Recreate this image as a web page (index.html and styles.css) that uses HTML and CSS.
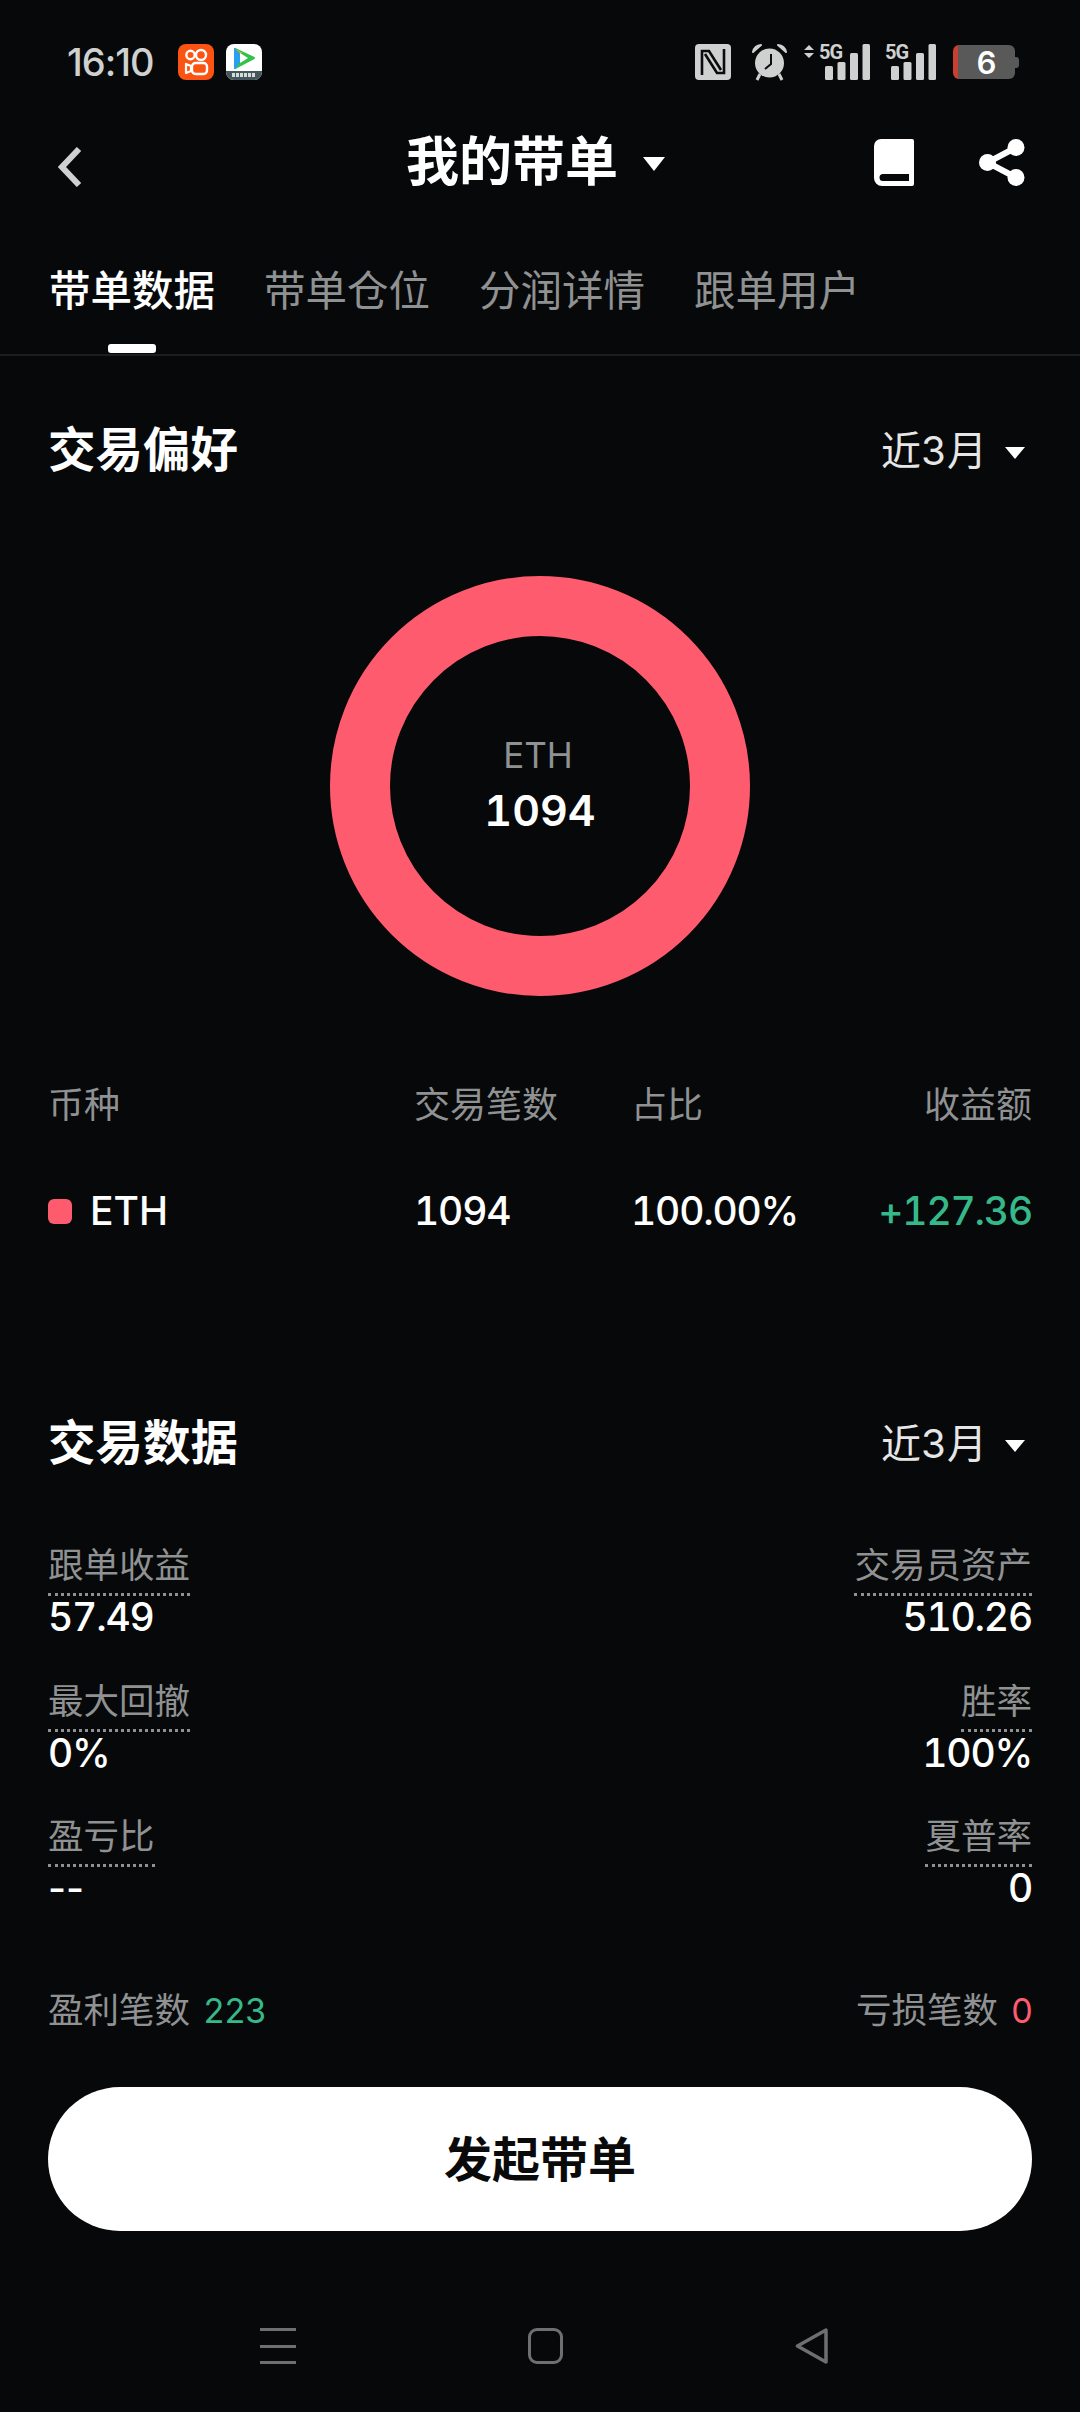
FILE: index.html
```html
<!DOCTYPE html>
<html lang="zh-CN">
<head>
    <meta charset="UTF-8">
    <meta name="viewport" content="width=device-width, initial-scale=1.0">
    <title>我的带单</title>
    <link rel="stylesheet" href="styles.css">
</head>
<body>

    <!-- Status bar -->
    <div class="status-bar">
        <div class="status-left">
            <span class="time">16:10</span>
            <svg class="app-icon" viewBox="0 0 36 36">
                <rect width="36" height="36" rx="8" fill="#fb5412"/>
                <circle cx="12.5" cy="11" r="4.2" fill="none" stroke="#fff" stroke-width="2.4"/>
                <circle cx="23" cy="11" r="5" fill="none" stroke="#fff" stroke-width="2.4"/>
                <rect x="14" y="19" width="15" height="11" rx="3.5" fill="none" stroke="#fff" stroke-width="2.4"/>
                <path d="M13 22 L8 20 V29 L13 27 Z" fill="none" stroke="#fff" stroke-width="2.2" stroke-linejoin="round"/>
            </svg>
            <svg class="app-icon" viewBox="0 0 36 36">
                <rect width="36" height="36" rx="8" fill="#fff"/>
                <path d="M0 27 H36 V28 A8 8 0 0 1 28 36 H8 A8 8 0 0 1 0 28 Z" fill="#45575c"/>
                <path d="M9 5 L28 14 L9 24 Z" fill="#35c24a" stroke="#35c24a" stroke-width="2" stroke-linejoin="round"/>
                <path d="M9 5 L15 14 L9 24 Z" fill="#2a9df4" stroke="#2a9df4" stroke-width="2" stroke-linejoin="round"/>
                <path d="M14 9 L22 14 L14 19 Z" fill="#fff"/>
                <path d="M9 5 L17 9 L14 9 Z" fill="#f6a623"/>
                <path d="M6 31 H30" stroke="#d5dadb" stroke-width="4" stroke-dasharray="3 1"/>
            </svg>
        </div>
        <div class="status-right">
            <svg class="nfc-icon" viewBox="0 0 36 36">
                <rect width="36" height="36" rx="4" fill="#cfd0d0"/>
                <path d="M7 31 V7 H14 L26 26" fill="none" stroke="#0a0c0d" stroke-width="2.6"/>
                <path d="M29 5 V29 H22 L10 10" fill="none" stroke="#0a0c0d" stroke-width="2.6"/>
            </svg>
            <svg class="alarm-icon" viewBox="0 0 37 38">
                <path d="M2 9 A9 9 0 0 1 10 2 Z M35 9 A9 9 0 0 0 27 2 Z" fill="#cfd0d0" stroke="#cfd0d0" stroke-width="2" stroke-linejoin="round"/>
                <circle cx="18.5" cy="20" r="14.5" fill="#cfd0d0"/>
                <path d="M6 37 L9 31 M31 37 L28 31" stroke="#cfd0d0" stroke-width="3"/>
                <path d="M20 11 V21 L14 26" fill="none" stroke="#0a0c0d" stroke-width="2"/>
            </svg>
            <svg class="signal-icon signal-wide" viewBox="0 0 66 36">
                <path d="M5 1 L10 6 H0 Z M0 9 H10 L5 14 Z" fill="#cfd0d0"/>
                <text x="15" y="15" class="signal-label">5G</text>
                <rect x="21" y="22" width="8" height="14" rx="1.5" fill="#cfd0d0"/>
                <rect x="33.500" y="18" width="8" height="18" rx="1.5" fill="#cfd0d0"/>
                <rect x="46" y="9" width="8" height="27" rx="1.5" fill="#cfd0d0"/>
                <rect x="58.500" y="0" width="7.500" height="36" rx="1.5" fill="#cfd0d0"/>
            </svg>
            <svg class="signal-icon signal-narrow" viewBox="0 0 51 36">
                <text x="0" y="15" class="signal-label">5G</text>
                <rect x="6" y="22" width="8" height="14" rx="1.5" fill="#cfd0d0"/>
                <rect x="18.500" y="18" width="8" height="18" rx="1.5" fill="#cfd0d0"/>
                <rect x="31" y="9" width="8" height="27" rx="1.5" fill="#cfd0d0"/>
                <rect x="43.500" y="0" width="7.500" height="36" rx="1.5" fill="#cfd0d0"/>
            </svg>
            <div class="battery">
                <div class="battery-body"><span>6</span></div>
                <div class="battery-tip"></div>
            </div>
        </div>
    </div>

    <!-- Nav bar -->
    <div class="nav-bar">
        <svg class="back-icon" viewBox="0 0 24 40">
            <path d="M21 2 L4 20 L21 38" fill="none" stroke="#d0d0d0" stroke-width="6"/>
        </svg>
        <div class="nav-title">
            <span>我的带单</span>
            <i class="caret caret-big"></i>
        </div>
        <div class="nav-actions">
            <svg class="book-icon" viewBox="0 0 40 47">
                <path d="M7 0 H38 A2 2 0 0 1 40 2 V45 A2 2 0 0 1 38 47 H8 A8 8 0 0 1 0 39 V7 A7 7 0 0 1 7 0 Z M9 35 A3.500 3.500 0 0 0 9 42 H35 V35 Z" fill="#fff" fill-rule="evenodd"/>
            </svg>
            <svg class="share-icon" viewBox="0 0 46 47">
                <path d="M37 8.500 L8.500 23.500 L37 38.500" fill="none" stroke="#fff" stroke-width="6"/>
                <circle cx="37" cy="8.500" r="8.500" fill="#fff"/>
                <circle cx="8.500" cy="23.500" r="8.500" fill="#fff"/>
                <circle cx="37" cy="38.500" r="8.500" fill="#fff"/>
            </svg>
        </div>
    </div>

    <!-- Tabs -->
    <div class="tabs">
        <div class="tab active">带单数据</div>
        <div class="tab">带单仓位</div>
        <div class="tab">分润详情</div>
        <div class="tab">跟单用户</div>
    </div>

    <!-- Trading preference -->
    <div class="section prefs">
        <div class="section-head">
            <h2>交易偏好</h2>
            <div class="period">近3月<i class="caret"></i></div>
        </div>

        <div class="donut">
            <svg class="donut-ring" viewBox="0 0 420 420">
                <circle cx="210" cy="210" r="180" fill="none" stroke="#ff5b6e" stroke-width="60"/>
            </svg>
            <div class="donut-text">
                <span class="donut-name">ETH</span>
                <span class="donut-num">1094</span>
            </div>
        </div>

        <div class="coin-table">
            <div class="th">币种</div>
            <div class="th">交易笔数</div>
            <div class="th">占比</div>
            <div class="th right">收益额</div>
            <div class="td coin"><i class="coin-dot"></i>ETH</div>
            <div class="td">1094</div>
            <div class="td">100.00%</div>
            <div class="td right green">+127.36</div>
        </div>
    </div>

    <!-- Trading data -->
    <div class="section trades">
        <div class="section-head">
            <h2>交易数据</h2>
            <div class="period">近3月<i class="caret"></i></div>
        </div>

        <div class="stats">
            <div class="stat">
                <span class="stat-label">跟单收益</span>
                <span class="stat-value">57.49</span>
            </div>
            <div class="stat end">
                <span class="stat-label">交易员资产</span>
                <span class="stat-value">510.26</span>
            </div>
            <div class="stat">
                <span class="stat-label">最大回撤</span>
                <span class="stat-value">0%</span>
            </div>
            <div class="stat end">
                <span class="stat-label">胜率</span>
                <span class="stat-value">100%</span>
            </div>
            <div class="stat">
                <span class="stat-label">盈亏比</span>
                <span class="stat-value dash">--</span>
            </div>
            <div class="stat end">
                <span class="stat-label">夏普率</span>
                <span class="stat-value">0</span>
            </div>
        </div>

        <div class="summary">
            <div>盈利笔数<span class="count green">223</span></div>
            <div>亏损笔数<span class="count red">0</span></div>
        </div>

        <button class="start-btn" type="button">发起带单</button>
    </div>

    <!-- System nav -->
    <div class="sys-nav">
        <div class="sys-menu"><i></i><i></i><i></i></div>
        <div class="sys-home"></div>
        <svg class="sys-back" viewBox="0 0 34 36">
            <path d="M2.500 18 L31 2 V34 Z" fill="none" stroke="#6f6f6f" stroke-width="3.500" stroke-linejoin="round"/>
        </svg>
    </div>

</body>
</html>
```

FILE: styles.css
```css
* {
    box-sizing: border-box;
}
html, body {
    margin: 0;
    padding: 0;
}
body {
    width: 1080px;
    height: 2412px;
    overflow: hidden;
    background: #060809;
    color: #fff;
    font-family: Inter, "Noto Sans CJK SC", sans-serif;
    font-feature-settings: "tnum";
}
i {
    display: block;
}

/* Status bar */
.status-bar {
    height: 124px;
    padding: 0 61px 0 67px;
    display: flex;
    justify-content: space-between;
    align-items: center;
}
.status-left, .status-right {
    display: flex;
    align-items: center;
}
.time {
    width: 111px;
    font-size: 38px;
    font-weight: 500;
    font-feature-settings: normal;
    letter-spacing: -1px;
    color: #cfd0d0;
}
.app-icon {
    width: 36px;
    height: 36px;
    margin-right: 12px;
}
.nfc-icon {
    width: 36px;
    height: 36px;
    margin-right: 20px;
}
.alarm-icon {
    width: 37px;
    height: 38px;
    margin-right: 16px;
}
.signal-icon {
    height: 36px;
    overflow: visible;
}
.signal-wide {
    width: 66px;
    margin-right: 15px;
}
.signal-narrow {
    width: 51px;
    margin-right: 17px;
}
.signal-label {
    font-family: Roboto, sans-serif;
    font-size: 20px;
    font-weight: 700;
    letter-spacing: -1px;
    fill: #cfd0d0;
}
.battery {
    display: flex;
    align-items: center;
}
.battery-body {
    width: 62px;
    height: 34px;
    border-radius: 6px;
    border-left: 5px solid #c8402f;
    background: #595959;
    display: flex;
    justify-content: center;
    align-items: center;
    font-size: 31px;
    font-weight: 600;
}
.battery-tip {
    width: 4px;
    height: 11px;
    border-radius: 0 3px 3px 0;
    background: #595959;
}

/* Nav bar */
.nav-bar {
    height: 76px;
    padding: 0 55px 0 58px;
    display: grid;
    grid-template-columns: 1fr auto 1fr;
    align-items: center;
}
.back-icon {
    width: 24px;
    height: 40px;
    margin-top: 10px;
}
.nav-title {
    display: flex;
    align-items: center;
    gap: 25px;
    padding-right: 12px;
    font-size: 53px;
    line-height: 76px;
    font-weight: 700;
}
.nav-actions {
    display: flex;
    justify-content: flex-end;
    gap: 65px;
}
.book-icon {
    width: 40px;
    height: 47px;
}
.share-icon {
    width: 46px;
    height: 47px;
}
.caret {
    width: 0;
    height: 0;
    display: inline-block;
    border-left: 10px solid transparent;
    border-right: 10px solid transparent;
    border-top: 12px solid #fff;
    margin-left: 12px;
    vertical-align: middle;
}
.caret-big {
    margin-left: 0;
    margin-top: 4px;
    border-left-width: 11px;
    border-right-width: 11px;
    border-top-width: 14px;
}

/* Tabs */
.tabs {
    height: 156px;
    padding: 60px 48px 0 49px;
    display: flex;
    gap: 49px;
    border-bottom: 2px solid #1b1e1f;
}
.tab {
    width: 166px;
    height: 94px;
    font-size: 41.5px;
    line-height: 62px;
    text-align: center;
    white-space: nowrap;
    color: #8f9192;
}
.tab.active {
    color: #fff;
    font-weight: 500;
}
.tab.active::after {
    content: "";
    display: block;
    width: 48px;
    height: 9px;
    margin: 22px auto 0;
    border-radius: 3px;
    background: #fff;
}

/* Sections */
.section {
    padding: 0 48px;
}
.section-head {
    height: 60px;
    display: flex;
    justify-content: space-between;
    align-items: center;
}
.section-head h2 {
    margin: 0 0 7px;
    font-size: 47.5px;
    font-weight: 700;
}
.period {
    display: flex;
    align-items: center;
    padding: 0 7px 4px 0;
    font-size: 40px;
    color: #e6e6e6;
}
.period .caret {
    margin-left: 18px;
    margin-top: 10px;
}
.prefs {
    padding-top: 64px;
}
.trades {
    padding-top: 177px;
}

/* Donut */
.donut {
    width: 420px;
    height: 420px;
    margin: 96px auto 0;
    display: grid;
}
.donut-ring, .donut-text {
    grid-area: 1 / 1;
}
.donut-ring {
    width: 420px;
    height: 420px;
}
.donut-text {
    padding-top: 154px;
    display: flex;
    flex-direction: column;
    align-items: center;
}
.donut-name {
    margin-right: 4px;
    font-size: 35px;
    line-height: 50px;
    color: #8f9192;
}
.donut-num {
    margin-top: 2px;
    font-size: 43px;
    line-height: 56px;
    font-weight: 600;
}

/* Coin table */
.coin-table {
    margin-top: 84px;
    display: grid;
    grid-template-columns: 366px 217px 178px 1fr;
    row-gap: 56px;
}
.th {
    font-size: 36px;
    line-height: 50px;
    color: #8f9192;
}
.td {
    font-size: 39px;
    line-height: 50px;
    font-weight: 500;
    letter-spacing: -1.2px;
}
.right {
    text-align: right;
}
.coin {
    display: flex;
    align-items: center;
    letter-spacing: 0;
}
.coin-dot {
    width: 24px;
    height: 25px;
    margin-right: 18px;
    border-radius: 6px;
    background: #ff5b6e;
}
.green {
    color: #36b98a;
}
.red {
    color: #ff5b6e;
}

/* Stats */
.stats {
    margin-top: 75px;
    display: grid;
    grid-template-columns: 1fr 1fr;
    grid-auto-rows: 90px;
    row-gap: 45.5px;
}
.stat {
    display: flex;
    flex-direction: column;
    align-items: flex-start;
}
.stat.end {
    align-items: flex-end;
}
.stat-label {
    height: 48px;
    padding-bottom: 10px;
    font-size: 35.5px;
    line-height: 36px;
    color: #8f9192;
    border-bottom: 3px dotted #8f9192;
}
.stat-value {
    font-size: 39px;
    line-height: 42px;
    font-weight: 500;
    letter-spacing: -1.2px;
}
.stat-value.dash {
    font-feature-settings: normal;
    letter-spacing: 0;
}

.summary {
    margin-top: 77px;
    display: flex;
    justify-content: space-between;
    font-size: 35.5px;
    line-height: 50px;
    color: #8f9192;
}
.count {
    margin-left: 13px;
    font-size: 34px;
    letter-spacing: -1px;
}

.start-btn {
    display: block;
    width: 984px;
    height: 144px;
    margin-top: 51px;
    padding-bottom: 8px;
    border: none;
    border-radius: 72px;
    background: #fff;
    color: #0a0a0a;
    font-family: inherit;
    font-size: 48px;
    font-weight: 700;
}

/* System nav */
.sys-nav {
    margin-top: 97px;
    padding: 0 251px 0 260px;
    display: flex;
    justify-content: space-between;
    align-items: center;
}
.sys-menu {
    width: 36px;
    height: 36px;
    display: flex;
    flex-direction: column;
    justify-content: space-between;
}
.sys-menu i {
    height: 3px;
    background: #6f6f6f;
}
.sys-home {
    width: 35px;
    height: 36px;
    border: 3.5px solid #6f6f6f;
    border-radius: 9px;
}
.sys-back {
    width: 34px;
    height: 36px;
}
```
